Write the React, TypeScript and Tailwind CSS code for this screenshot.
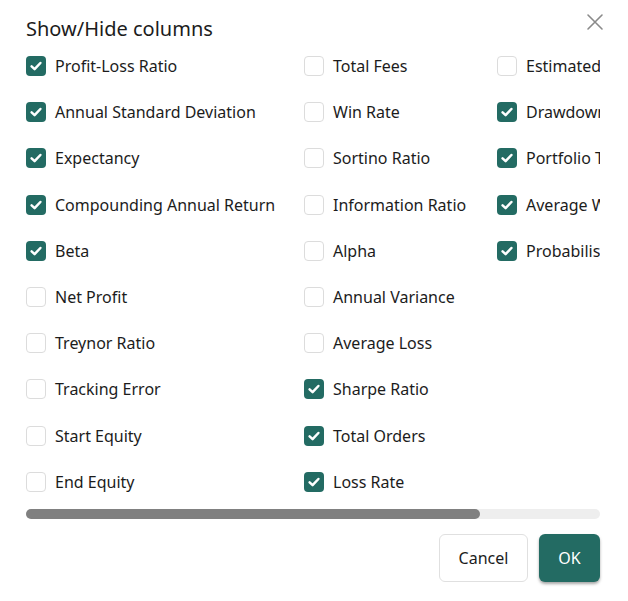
import React from "react";

type Item = { label: string; checked: boolean };

const col1: Item[] = [
  { label: "Profit-Loss Ratio", checked: true },
  { label: "Annual Standard Deviation", checked: true },
  { label: "Expectancy", checked: true },
  { label: "Compounding Annual Return", checked: true },
  { label: "Beta", checked: true },
  { label: "Net Profit", checked: false },
  { label: "Treynor Ratio", checked: false },
  { label: "Tracking Error", checked: false },
  { label: "Start Equity", checked: false },
  { label: "End Equity", checked: false },
];

const col2: Item[] = [
  { label: "Total Fees", checked: false },
  { label: "Win Rate", checked: false },
  { label: "Sortino Ratio", checked: false },
  { label: "Information Ratio", checked: false },
  { label: "Alpha", checked: false },
  { label: "Annual Variance", checked: false },
  { label: "Average Loss", checked: false },
  { label: "Sharpe Ratio", checked: true },
  { label: "Total Orders", checked: true },
  { label: "Loss Rate", checked: true },
];

const col3: Item[] = [
  { label: "Estimated Strategy Capacity", checked: false },
  { label: "Drawdown", checked: true },
  { label: "Portfolio Turnover", checked: true },
  { label: "Average Win", checked: true },
  { label: "Probabilistic Sharpe Ratio", checked: true },
];

function Box({ checked }: { checked: boolean }) {
  if (checked) {
    return (
      <span className="flex h-[20px] w-[20px] shrink-0 items-center justify-center rounded-[4px] bg-[#236b63]">
        <svg width="14" height="14" viewBox="0 0 14 14" fill="none">
          <path d="M2.6 7.4 L5.6 10.2 L11.4 4" stroke="white" strokeWidth="2.5" strokeLinecap="round" strokeLinejoin="round" />
        </svg>
      </span>
    );
  }
  return <span className="h-[20px] w-[20px] shrink-0 rounded-[4px] border border-[#dcdcdc] bg-white" />;
}

function Column({ items, className }: { items: Item[]; className: string }) {
  return (
    <div className={"flex shrink-0 flex-col " + className}>
      {items.map((it) => (
        <div key={it.label} className="flex h-[46.2px] items-center gap-[9px] whitespace-nowrap">
          <Box checked={it.checked} />
          <span className="text-[16px] leading-[24px] text-[#1c1c1c]">{it.label}</span>
        </div>
      ))}
    </div>
  );
}

export default function App() {
  return (
    <div
      className="h-[601px] w-[628px] bg-white pl-[26px] pr-[28px] pt-[14px]"
      style={{ fontFamily: '"Noto Sans", "Open Sans", sans-serif' }}
    >
      <div className="flex h-[29px] items-center justify-between">
        <h2 className="text-[20px] leading-[28px] text-[#1c1c1c]">Show/Hide columns</h2>
        <button className="-mr-[5px] -mt-[14px] flex h-[20px] w-[20px] items-center justify-center">
          <svg width="18" height="18" viewBox="0 0 18 18" fill="none">
            <path d="M2 2 L16 16 M16 2 L2 16" stroke="#8a8a8a" strokeWidth="1.6" strokeLinecap="round" />
          </svg>
        </button>
      </div>
      <div className="overflow-hidden">
        <div className="flex w-[740px]">
          <Column items={col1} className="w-[278px]" />
          <Column items={col2} className="w-[193px]" />
          <Column items={col3} className="w-[230px]" />
        </div>
      </div>
      <div className="mt-[4px] h-[10px] w-full rounded-[5px] bg-[#eeeeee]">
        <div className="h-full w-[454px] rounded-[5px] bg-[#808080]" />
      </div>
      <div className="mt-[15px] flex justify-end gap-[11px]">
        <button className="h-[48px] w-[89px] rounded-[6px] border border-[#e0e0e0] bg-white text-[16px] text-[#1c1c1c]">
          Cancel
        </button>
        <button className="h-[48px] w-[61px] rounded-[6px] bg-[#236b63] text-[16px] text-white shadow-[0_2px_3px_rgba(0,0,0,0.35)]">
          OK
        </button>
      </div>
    </div>
  );
}
